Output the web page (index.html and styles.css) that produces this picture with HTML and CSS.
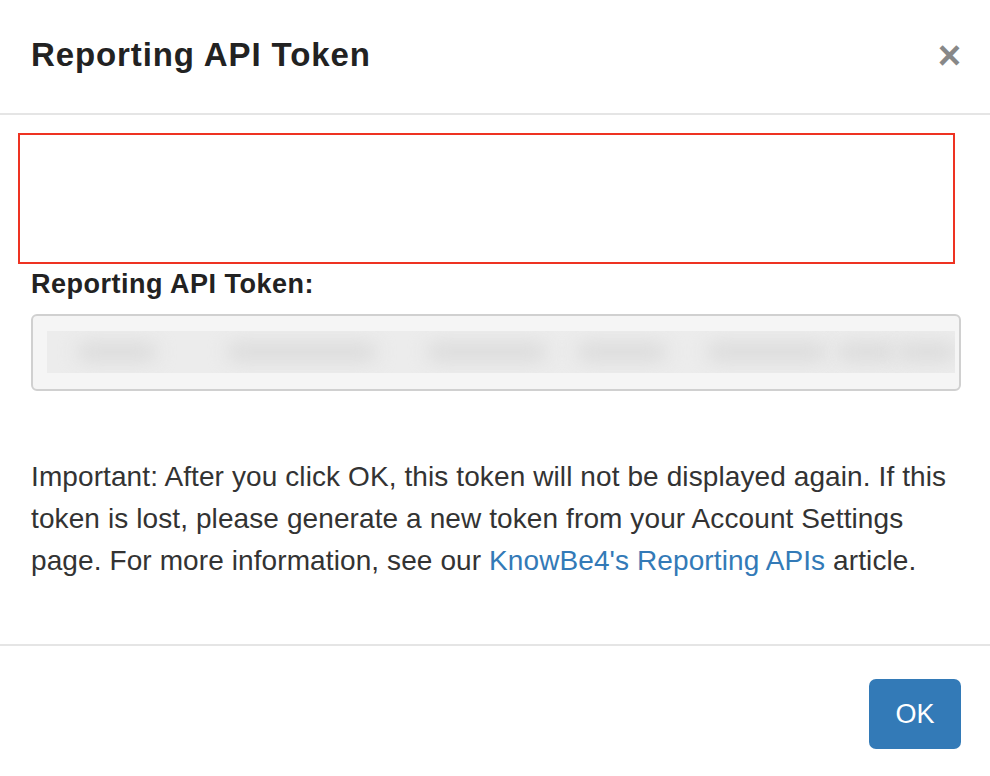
FILE: index.html
```html
<!DOCTYPE html>
<html>
<head>
  <title>Reporting API Token</title>
  <meta charset="UTF-8">
  <link rel="stylesheet" href="styles.css">
</head>
<body>
  <div class="modal">
    <div class="modal-header">
      <h4 class="modal-title">Reporting API Token</h4>
      <button class="close" type="button">&times;</button>
    </div>

    <div class="modal-body">
      <div class="highlight-box"></div>

      <label class="token-label">Reporting API Token:</label>
      <div class="token-field">
        <div class="token-blur">
          <span class="blob b1"></span>
          <span class="blob b2"></span>
          <span class="blob b3"></span>
          <span class="blob b4"></span>
          <span class="blob b5"></span>
          <span class="blob b6"></span>
          <span class="blob b7"></span>
        </div>
      </div>

      <p class="notice">Important: After you click OK, this token will not be displayed again. If this<br>
        token is lost, please generate a new token from your Account Settings<br>
        page. For more information, see our <a href="#">KnowBe4's Reporting APIs</a> article.</p>
    </div>

    <div class="modal-footer">
      <button class="btn-primary" type="button">OK</button>
    </div>
  </div>
</body>
</html>
```

FILE: styles.css
```css
body {
  margin: 0;
  font-family: "Liberation Sans", Arial, Helvetica, sans-serif;
  color: #333;
  background: #fff;
}
.modal { width: 990px; }

.modal-header {
  display: flex;
  align-items: center;
  justify-content: space-between;
  height: 115px;
  padding: 0 29px 0 31px;
  border-bottom: 2px solid #e5e5e5;
  box-sizing: border-box;
}
.modal-title {
  margin: 0;
  font-size: 33px;
  font-weight: bold;
  color: #222;
  letter-spacing: 0.9px;
  padding-bottom: 4px;
}
.close {
  border: none;
  background: none;
  padding: 0;
  font-family: "Liberation Sans", Arial, sans-serif;
  font-size: 40px;
  font-weight: bold;
  line-height: 1;
  color: #888;
  cursor: pointer;
  margin-bottom: 4px;
}

.modal-body { padding: 18px 29px 0 31px; }
.highlight-box {
  margin-left: -13px;
  margin-right: 6px;
  height: 127px;
  border: 2px solid #ee3322;
}
.token-label {
  display: block;
  margin-top: 5px;
  font-size: 27px;
  font-weight: bold;
  color: #222;
  letter-spacing: 0.5px;
}
.token-field {
  margin-top: 14px;
  height: 77px;
  border: 2px solid #d0d0d0;
  border-radius: 6px;
  background: #f5f5f5;
  box-sizing: border-box;
  padding: 15px 4px 0 14px;
  overflow: hidden;
}
.token-blur {
  position: relative;
  height: 42px;
  background: #ececec;
  overflow: hidden;
}
.blob {
  position: absolute;
  top: 11px;
  height: 20px;
  background: #dcdcdc;
  border-radius: 10px;
  filter: blur(9px);
}
.b1 { left: 30px; width: 80px; }
.b2 { left: 180px; width: 150px; }
.b3 { left: 380px; width: 120px; }
.b4 { left: 530px; width: 90px; }
.b5 { left: 660px; width: 120px; }
.b6 { left: 790px; width: 60px; }
.b7 { left: 850px; width: 60px; }

.notice {
  margin: 65px 0 0;
  font-size: 28px;
  line-height: 42px;
  color: #333;
  letter-spacing: 0.1px;
  white-space: nowrap;
}
.notice a { color: #337ab7; text-decoration: none; }

.modal-footer {
  margin-top: 62px;
  border-top: 2px solid #e5e5e5;
  display: flex;
  justify-content: flex-end;
  padding: 33px 29px 0 0;
}
.btn-primary {
  width: 92px;
  height: 70px;
  border: none;
  border-radius: 7px;
  background: #337ab7;
  color: #fff;
  font-family: "Liberation Sans", Arial, sans-serif;
  font-size: 27px;
  cursor: pointer;
}
```
